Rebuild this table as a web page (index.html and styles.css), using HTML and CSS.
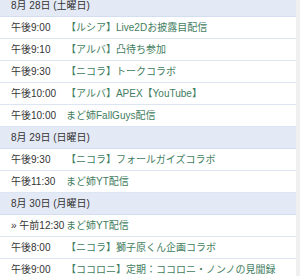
FILE: index.html
```html
<!DOCTYPE html>
<html lang="ja">
<head>
<meta charset="utf-8">
<link rel="stylesheet" href="styles.css">
</head>
<body>
<div class="schedule">
  <div class="day">8月 28日 (土曜日)</div>
  <div class="row"><span class="time">午後9:00</span><span class="ev">【ルシア】Live2Dお披露目配信</span></div>
  <div class="row"><span class="time">午後9:10</span><span class="ev">【アルバ】凸待ち参加</span></div>
  <div class="row"><span class="time">午後9:30</span><span class="ev">【ニコラ】トークコラボ</span></div>
  <div class="row"><span class="time">午後10:00</span><span class="ev">【アルバ】APEX【YouTube】</span></div>
  <div class="row"><span class="time">午後10:00</span><span class="ev">まど姉FallGuys配信</span></div>
  <div class="day">8月 29日 (日曜日)</div>
  <div class="row"><span class="time">午後9:30</span><span class="ev">【ニコラ】フォールガイズコラボ</span></div>
  <div class="row"><span class="time">午後11:30</span><span class="ev">まど姉YT配信</span></div>
  <div class="day">8月 30日 (月曜日)</div>
  <div class="row"><span class="time">» 午前12:30</span><span class="ev">まど姉YT配信</span></div>
  <div class="row"><span class="time">午後8:00</span><span class="ev">【ニコラ】獅子原くん企画コラボ</span></div>
  <div class="row"><span class="time">午後9:00</span><span class="ev">【ココロニ】定期：ココロニ・ノンノの見聞録</span></div>
</div>
</body>
</html>
```
FILE: styles.css
```css
html, body {
  margin: 0;
  padding: 0;
  background: #f0f0f0;
  overflow: hidden;
}
body {
  width: 300px;
  height: 276px;
  font-family: "Liberation Sans", "Noto Sans CJK JP", sans-serif;
  font-size: 10px;
  color: #333333;
}
.schedule {
  width: 296px;
  margin-top: -5px;
  background: #ffffff;
}
.day {
  height: 21px;
  line-height: 21px;
  padding-left: 11px;
  background: #e3eaf6;
  border-bottom: 1px solid #d3def0;
  color: #333333;
}
.row {
  display: grid;
  grid-template-columns: 55px 1fr;
  height: 21px;
  line-height: 21px;
  padding-left: 11px;
  border-bottom: 1px solid #dce6f3;
  white-space: nowrap;
}
.time {
  color: #333333;
}
.ev {
  color: #3f7d5e;
}
```
